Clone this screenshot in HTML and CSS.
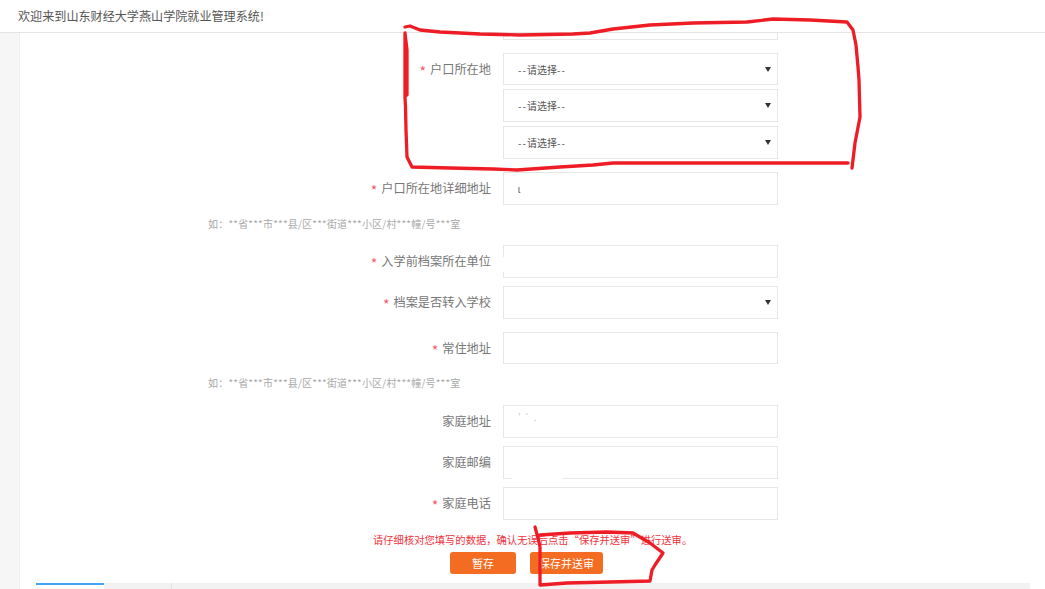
FILE: index.html
```html
<!DOCTYPE html>
<html lang="zh-CN">
<head>
<meta charset="utf-8">
<title>就业管理系统</title>
<link rel="stylesheet" href="styles.css">
</head>
<body>
<div class="page">
  <header class="topbar">欢迎来到山东财经大学燕山学院就业管理系统!</header>
  <div class="body-row">
    <aside class="side"></aside>
    <main class="content">
      <div class="form">
        <div class="row stub-row"><div></div><div class="field stub"></div></div>

        <div class="row gap-13">
          <label class="label"><span class="star">*</span>户口所在地</label>
          <div class="stack">
            <div class="field select short"><span class="dash">--</span>请选择<span class="dash">--</span><i class="caret"></i></div>
            <div class="field select"><span class="dash">--</span>请选择<span class="dash">--</span><i class="caret"></i></div>
            <div class="field select"><span class="dash">--</span>请选择<span class="dash">--</span><i class="caret"></i></div>
          </div>
        </div>

        <div class="row gap-13">
          <label class="label"><span class="star">*</span>户口所在地详细地址</label>
          <div class="field value">ɩ</div>
        </div>
        <p class="hint">如&#65306;**省***市***县/区***街道***小区/村***幢/号***室</p>

        <div class="row">
          <label class="label"><span class="star">*</span>入学前档案所在单位</label>
          <div class="field"><i class="mask mask-left"></i></div>
        </div>
        <div class="row gap-8">
          <label class="label"><span class="star">*</span>档案是否转入学校</label>
          <div class="field select"><i class="caret"></i></div>
        </div>
        <div class="row gap-13">
          <label class="label"><span class="star">*</span>常住地址</label>
          <div class="field short"></div>
        </div>
        <p class="hint hint-wide">如&#65306;**省***市***县/区***街道***小区/村***幢/号***室</p>

        <div class="row">
          <label class="label">家庭地址</label>
          <div class="field specks">' ` .</div>
        </div>
        <div class="row gap-8">
          <label class="label">家庭邮编</label>
          <div class="field"><i class="mask mask-bottom"></i></div>
        </div>
        <div class="row gap-8">
          <label class="label"><span class="star">*</span>家庭电话</label>
          <div class="field"></div>
        </div>

        <p class="notice">请仔细核对您填写的数据&#65292;确认无误后点击<span class="quote">&ldquo;</span>保存并送审<span class="quote">&rdquo;</span>进行送审&#12290;</p>
        <div class="actions">
          <button class="btn btn-save" type="button">暂存</button>
          <button class="btn btn-submit" type="button">保存并送审</button>
        </div>
      </div>
      <div class="tabs">
        <div class="tab active"></div>
        <div class="tab"></div>
        <div class="tab rest"></div>
      </div>
    </main>
  </div>
  <svg class="scribble" viewBox="0 0 1045 589" width="1045" height="589" aria-hidden="true">
    <path d="M407 95 L407 50 L405 33 L405 97 L405.500 107 L406 130 L407 157 L412 167 L450 168 L493 169 L517 170 L560 167 L593 165 L613 163 L700 163 L848 163 M852 168 L855 143 L860 117 L859 80 L858 67 L856 45 L853 30 L847 22 L810 20 L773 19 L747 22 L693 23 L650 25 L613 29 L590 33 L573 34 L520 35 L480 34 L440 32 L420 30 L410 26 L405 27"/>
    <path d="M535 527 L538 538 L540 547 L540 585 L567 583 L610 582 L650 581 L652 570 L655 565 L663 553 L650 543 L633 533 L607 532 L570 533 L540 535"/>
  </svg>
</div>
</body>
</html>
```
FILE: styles.css
```css
* { box-sizing: border-box; }
html, body { margin: 0; padding: 0; height: 100%; overflow: hidden; background: #fff; }
body { font-family: "Noto Sans CJK SC", "Liberation Sans", sans-serif; font-size: 12px; color: #777; }

.page { position: relative; width: 1045px; height: 589px; overflow: hidden; display: flex; flex-direction: column; }

.topbar { height: 33px; flex: none; padding: 0 18px 2px; display: flex; align-items: center; font-size: 12.1px; color: #555; background: #fff; border-bottom: 1px solid #e4e4e4; }

.body-row { flex: 1; display: flex; min-height: 0; }
.side { width: 19px; flex: none; background: #f6f6f6; }
.content { flex: 1; display: flex; flex-direction: column; min-width: 0; background: #fff; box-shadow: inset 1px 0 0 #efefef; }
.form { flex: 1; }

.row { display: grid; grid-template-columns: 472px 275px; column-gap: 12px; align-items: start; }
.gap-13 { margin-top: 13px; }
.gap-8 { margin-top: 8px; }

.label { display: block; text-align: right; line-height: 32px; font-size: 12.2px; color: #777; white-space: nowrap; }
.star { color: #f55a6a; font-size: 14px; line-height: 1; margin-right: 4px; vertical-align: -3px; }

.stack { display: flex; flex-direction: column; gap: 4px; }
.field { position: relative; height: 33px; border: 1px solid #e6e6e6; background: #fff; padding-left: 14px; line-height: 31px; font-size: 10px; color: #555; }
.field.short { height: 32px; }
.stub { height: 6.5px; border-top: 0; }
.select { padding-right: 26px; }
.dash { letter-spacing: 1px; }
.value { color: #556; }
.specks { font-size: 9px; color: #c4c4c4; line-height: 24px; letter-spacing: 1px; }

.caret { position: absolute; right: 6px; top: 13px; width: 0; height: 0; border-left: 3px solid transparent; border-right: 3px solid transparent; border-top: 5px solid #333; }

.mask { position: absolute; background: #fff; }
.mask-left { left: -1px; top: 11px; width: 1px; height: 15px; }
.mask-bottom { left: 8px; bottom: -1px; width: 51px; height: 1px; }

.hint { margin: 0; height: 40px; padding: 12px 0 0 189px; font-size: 10px; line-height: 14px; letter-spacing: 0.2px; color: #a8a8a8; white-space: nowrap; }
.hint-wide { height: 41px; }

.notice { margin: 0; height: 32px; padding: 13px 0 0 354px; font-size: 10.3px; line-height: 14px; color: #f0323c; white-space: nowrap; }
.quote { display: inline-block; width: 1em; text-align: right; }
.quote + .quote { text-align: left; }

.actions { display: flex; gap: 14px; padding-left: 431px; }
.btn { height: 22px; border: 0; border-radius: 3px; background: #f36c21; color: #fff; font: inherit; font-size: 11px; padding: 0; }
.btn-save { width: 66px; }
.btn-submit { width: 73px; }

.tabs { flex: none; display: flex; height: 6px; margin: 0 15px 0 17px; background: #f2f2f2; }
.tab { width: 68px; }
.tab.active { background: #fff; border-top: 2px solid #42a5f5; }
.tab:nth-child(2) { border-right: 1px solid #e4e4e4; }
.tab.rest { flex: 1; }

.scribble { position: absolute; left: 0; top: 0; pointer-events: none; }
.scribble path { fill: none; stroke: #ee1c25; stroke-width: 3.3; stroke-linejoin: round; stroke-linecap: round; }
```
